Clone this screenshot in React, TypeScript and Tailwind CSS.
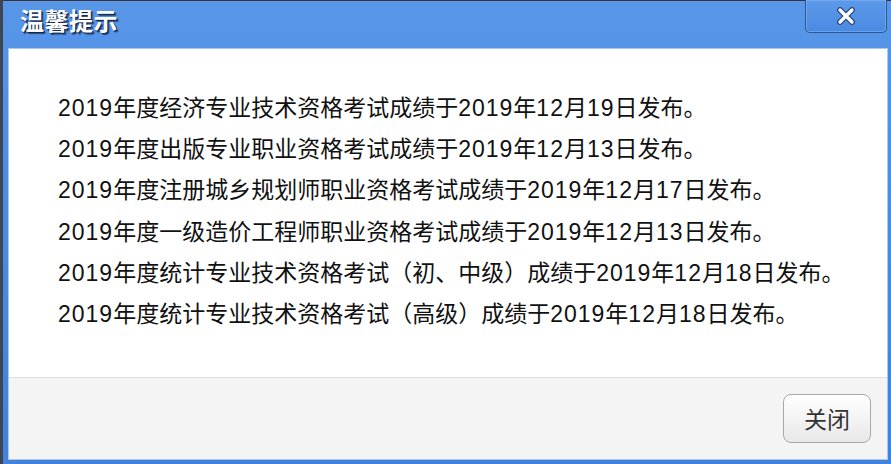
import React from "react";

const lines = [
  "2019年度经济专业技术资格考试成绩于2019年12月19日发布。",
  "2019年度出版专业职业资格考试成绩于2019年12月13日发布。",
  "2019年度注册城乡规划师职业资格考试成绩于2019年12月17日发布。",
  "2019年度一级造价工程师职业资格考试成绩于2019年12月13日发布。",
  "2019年度统计专业技术资格考试（初、中级）成绩于2019年12月18日发布。",
  "2019年度统计专业技术资格考试（高级）成绩于2019年12月18日发布。",
];

function Line({ text }: { text: string }) {
  const parts = text.split(/(\d+)/);
  return (
    <div className="whitespace-nowrap h-[41.2px] leading-[41.2px]">
      {parts.map((p, i) =>
        /^\d+$/.test(p) ? (
          <span
            key={i}
            className="tracking-[1px]"
            style={{ fontFamily: '"Liberation Sans", Arial, sans-serif' }}
          >
            {p}
          </span>
        ) : (
          <span key={i}>{p}</span>
        )
      )}
    </div>
  );
}

export default function App() {
  return (
    <div
      className="w-[891px] h-[464px] flex bg-[#3e4652] pl-[3px] overflow-hidden"
      style={{ fontFamily: '"Noto Sans CJK SC", "Noto Sans", sans-serif' }}
    >
      <div className="flex-1 flex flex-col border-t border-[#3a3438] bg-gradient-to-b from-[#5896e8] via-[#4a8ae2] to-[#4282dc]">
        {/* Title bar */}
        <div className="h-[47px] flex items-start justify-between pl-[17px] pr-[4px]">
          <div
            className="mt-[4px] text-[24px] font-bold text-white leading-[30px] tracking-[0.5px]"
            style={{ textShadow: "1px 1px 0 #14264a, 2px 2px 1px rgba(10,20,50,0.6)" }}
          >
            温馨提示
          </div>
          <div className="w-[82px] h-[33px] -mt-[1px] rounded-b-[5px] border border-[#2c5595] border-t-0 bg-gradient-to-b from-[#5c99e9] to-[#4b8ae2] flex items-center justify-center shadow-[inset_0_0_0_1px_rgba(140,185,240,0.5)]">
            <svg width="20" height="18" viewBox="0 0 20 18">
              <path d="M4 3 L16 15 M16 3 L4 15" stroke="#2a4d85" strokeWidth="6" strokeLinecap="round" />
              <path d="M4 3 L16 15 M16 3 L4 15" stroke="#ffffff" strokeWidth="3.2" strokeLinecap="round" />
            </svg>
          </div>
        </div>
        {/* Body */}
        <div className="flex-1 flex flex-col ml-[5px] mr-[3px] mb-[4px] border border-[#a9c8f0] bg-white">
          <div className="h-[328px] bg-white pl-[49px] pt-[37px] text-[#111] text-[23px]">
            {lines.map((l, i) => (
              <Line key={i} text={l} />
            ))}
          </div>
          <div className="flex-1 bg-[#f4f4f4] border-t border-[#dedede] flex items-start justify-end pr-[16px] pt-[16px]">
            <button className="w-[88px] h-[49px] rounded-[8px] border border-[#a8a8a8] bg-gradient-to-b from-[#ffffff] to-[#e8e8e8] text-[23px] text-[#333] flex items-center justify-center shadow-[inset_0_1px_0_#fff]">
              关闭
            </button>
          </div>
        </div>
      </div>
    </div>
  );
}
